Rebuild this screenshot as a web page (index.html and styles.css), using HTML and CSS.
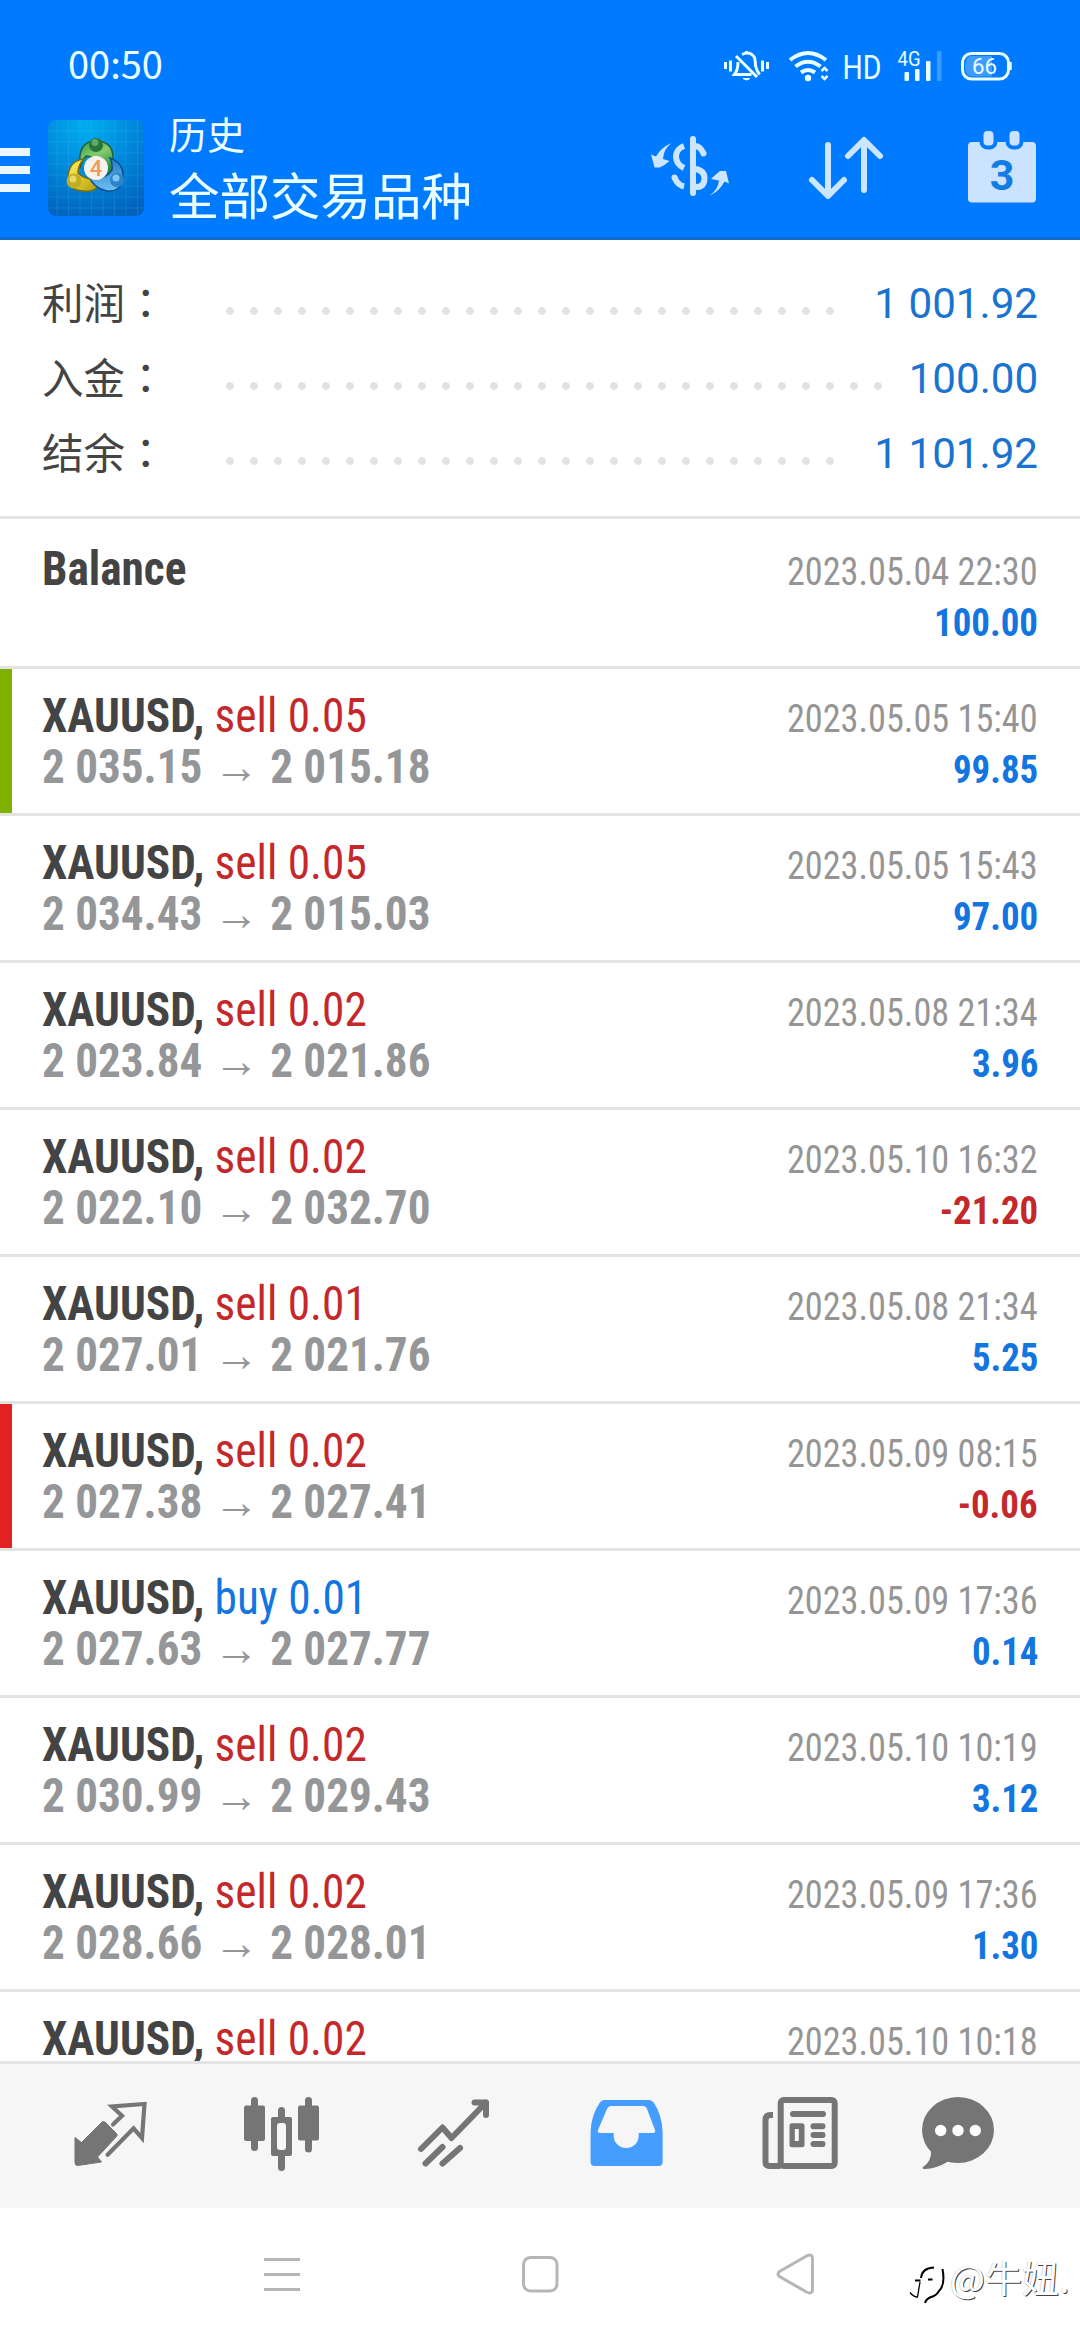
FILE: index.html
```html
<!DOCTYPE html>
<html lang="zh-CN">
<head>
<meta charset="utf-8">
<title>历史</title>
<link rel="stylesheet" href="styles.css">
</head>
<body>
<div class="screen">
  <header class="header">
    <div class="status">
      <span class="clock">00:50</span>
      <svg class="status-icons" viewBox="715 40 310 52">
        <g fill="none" stroke="#eaffff" stroke-width="3">
          <path d="M725.5 62v7M730.5 60.500v11M762.500 60.500v11M767.500 62v7"/>
          <path d="M736 56l21 21M742 54.500q8-4 12.500 3q1 4 1 8q1 5 4 9M738 62q0 8-3.500 12.500h17M746.500 51v3"/>
          <path d="M743 78.500q3.500 3 7 0z" fill="#eaffff" stroke-width="1"/>
          <path d="M790 60q18-14 36 0M795.500 66.500q12.500-9.500 25 0M801 72.500q7-5 14 0" stroke-width="4"/>
          <path d="M821.500 71l3-3 3 3M821.500 76l3 3 3-3" stroke-width="2.500"/>
          <rect x="962.500" y="53.500" width="46" height="25.500" rx="9"/>
          <path d="M1010.500 62v8" stroke-width="2.500"/>
        </g>
        <path d="M970 56h22v20.500h-22q-5-2-5-10t5-10.500z" fill="#fff" opacity=".25"/>
        <circle cx="808" cy="78" r="3.200" fill="#eaffff"/>
        <g fill="#eaffff">
          <rect x="904.500" y="72" width="4.500" height="9" rx="1"/>
          <rect x="915" y="69" width="4.500" height="12" rx="1"/>
          <rect x="926" y="61" width="4.500" height="20" rx="1"/>
          <rect x="937" y="51" width="4.500" height="30" rx="1" opacity=".25"/>
          <text x="842.500" y="78.500" font-size="33" textLength="39" lengthAdjust="spacingAndGlyphs">HD</text>
          <text x="897.500" y="66" font-size="20.500" textLength="23" lengthAdjust="spacingAndGlyphs">4G</text>
          <text x="972" y="74" font-size="22.500" textLength="25" lengthAdjust="spacingAndGlyphs">66</text>
        </g>
      </svg>
    </div>
    <div class="toolbar">
      <div class="menu"><i></i><i></i><i></i></div>
      <svg class="logo" viewBox="0 0 96 96">
        <defs>
          <radialGradient id="bg" cx=".4" cy=".05" r="1"><stop offset="0" stop-color="#00aeee"/><stop offset=".5" stop-color="#0088dc"/><stop offset="1" stop-color="#0062bb"/></radialGradient>
          <linearGradient id="gr" x2=".5" y2="1"><stop offset="0" stop-color="#2f9c4e"/><stop offset=".5" stop-color="#86cc6c"/><stop offset="1" stop-color="#248640"/></linearGradient>
          <linearGradient id="ye" x2="1" y2="1"><stop offset="0" stop-color="#fff36a"/><stop offset=".5" stop-color="#e2c92c"/><stop offset="1" stop-color="#a99c18"/></linearGradient>
          <linearGradient id="bl" x2="0" y2="1"><stop offset="0" stop-color="#2878c4"/><stop offset="1" stop-color="#6cc0f4"/></linearGradient>
        </defs>
        <rect width="96" height="96" rx="8" fill="url(#bg)"/>
        <path d="M9 0v96M20.500 0v96M32 0v96M43.500 0v96M55 0v96M66.500 0v96M78 0v96M89.500 0v96M0 11h96M0 22h96M0 33h96M0 44h96M0 55h96M0 66h96M0 77h96M0 88h96" stroke="#5fd0ff" stroke-width="1" opacity=".16"/>
        <path d="M32 48q-3-27 16-27t17 22q0 12-7 14q-6-20-20-21q-4 4-6 12z" fill="url(#gr)" stroke="#245f35" stroke-width="1.500"/>
        <path d="M36 39q-14 1-16 17q-1 14 15 15q17 2 15-12q-14 1-20-6q0-8 6-14z" fill="url(#ye)" stroke="#776f12" stroke-width="1.500"/>
        <path d="M62 38q14 5 13 20q-2 14-16 13q-14-3-18-15q16 5 23-6q1-6-2-12z" fill="url(#bl)" stroke="#0a528f" stroke-width="1.500"/>
        <circle cx="48" cy="25" r="7" fill="#28753a"/><circle cx="47" cy="22.500" r="3.500" fill="#61a767"/>
        <circle cx="26" cy="61" r="7.500" fill="#c1ad24"/><circle cx="25" cy="59" r="3.500" fill="#e6da62"/>
        <circle cx="69" cy="60" r="7" fill="#2d83c9"/><circle cx="68" cy="58" r="3.500" fill="#7fc6f2"/>
        <circle cx="48" cy="48" r="12" fill="#f7f2f0"/>
        <text x="48" y="55.500" class="logo-num">4</text>
      </svg>
      <div class="titles"><div class="title">历史</div><div class="subtitle">全部交易品种</div></div>
      <svg class="actions" viewBox="640 120 440 96">
        <g fill="#cce6ff">
          <rect x="690" y="136" width="6" height="60" rx="3"/>
          <path d="M671.500 143q-8 6-8.500 16l6.500 2q-6 5-10 6.500h-5l-3.500-13 5 2q5-9 15.500-13.500z"/>
          <path d="M709 196q9-6 10-15.500l-8-1.500q5-5 9-8h6l3 12.500-4.500-2q-5 10-15.500 14.500z"/>
        </g>
        <g fill="none" stroke="#cce6ff" stroke-width="6">
          <path d="M684 146q-8 3-8 10.500t8 11.500M674.500 177.500q3 7.500 9.500 9"/>
          <path d="M674.500 177.500h.01M703.500 153.500q-3-7-8-7.500M695 169q10 1.500 9.500 10t-9.500 8" stroke-linecap="round"/>
          <path d="M828 145v50M812 180l16 16 16-16M864 190v-49M848 156l16-16 16 16" stroke-linecap="round" stroke-linejoin="round"/>
        </g>
        <rect x="968" y="142" width="68" height="60.500" rx="4" fill="#cce3ff"/>
        <g fill="#cce3ff" stroke="#007aff" stroke-width="4"><rect x="981.500" y="129" width="14" height="18.500" rx="6"/><rect x="1007.500" y="129" width="14" height="18.500" rx="6"/></g>
        <text x="1002" y="189.500" class="cal-num">3</text>
      </svg>
    </div>
  </header>

  <section class="summary">
    <div class="sum-row"><span class="sum-label">利润<span lang="zh-TW">：</span></span><span class="dots"></span><span class="sum-value">1 001.92</span></div>
    <div class="sum-row"><span class="sum-label">入金<span lang="zh-TW">：</span></span><span class="dots dots-long"></span><span class="sum-value">100.00</span></div>
    <div class="sum-row"><span class="sum-label">结余<span lang="zh-TW">：</span></span><span class="dots"></span><span class="sum-value">1 101.92</span></div>
  </section>

  <main class="list">
    <article class="deal first"><div class="line"><b class="name">Balance</b><span class="date">2023.05.04 22:30</span></div><div class="line"><b class="price">&nbsp;</b><b class="profit">100.00</b></div></article>
    <article class="deal tp"><div class="line"><span class="name"><b>XAUUSD,</b> <span class="sell">sell 0.05</span></span><span class="date">2023.05.05 15:40</span></div><div class="line"><b class="price">2 035.15 <i>→</i> 2 015.18</b><b class="profit">99.85</b></div></article>
    <article class="deal"><div class="line"><span class="name"><b>XAUUSD,</b> <span class="sell">sell 0.05</span></span><span class="date">2023.05.05 15:43</span></div><div class="line"><b class="price">2 034.43 <i>→</i> 2 015.03</b><b class="profit">97.00</b></div></article>
    <article class="deal"><div class="line"><span class="name"><b>XAUUSD,</b> <span class="sell">sell 0.02</span></span><span class="date">2023.05.08 21:34</span></div><div class="line"><b class="price">2 023.84 <i>→</i> 2 021.86</b><b class="profit">3.96</b></div></article>
    <article class="deal"><div class="line"><span class="name"><b>XAUUSD,</b> <span class="sell">sell 0.02</span></span><span class="date">2023.05.10 16:32</span></div><div class="line"><b class="price">2 022.10 <i>→</i> 2 032.70</b><b class="profit loss">-21.20</b></div></article>
    <article class="deal"><div class="line"><span class="name"><b>XAUUSD,</b> <span class="sell">sell 0.01</span></span><span class="date">2023.05.08 21:34</span></div><div class="line"><b class="price">2 027.01 <i>→</i> 2 021.76</b><b class="profit">5.25</b></div></article>
    <article class="deal sl"><div class="line"><span class="name"><b>XAUUSD,</b> <span class="sell">sell 0.02</span></span><span class="date">2023.05.09 08:15</span></div><div class="line"><b class="price">2 027.38 <i>→</i> 2 027.41</b><b class="profit loss">-0.06</b></div></article>
    <article class="deal"><div class="line"><span class="name"><b>XAUUSD,</b> <span class="buy">buy 0.01</span></span><span class="date">2023.05.09 17:36</span></div><div class="line"><b class="price">2 027.63 <i>→</i> 2 027.77</b><b class="profit">0.14</b></div></article>
    <article class="deal"><div class="line"><span class="name"><b>XAUUSD,</b> <span class="sell">sell 0.02</span></span><span class="date">2023.05.10 10:19</span></div><div class="line"><b class="price">2 030.99 <i>→</i> 2 029.43</b><b class="profit">3.12</b></div></article>
    <article class="deal"><div class="line"><span class="name"><b>XAUUSD,</b> <span class="sell">sell 0.02</span></span><span class="date">2023.05.09 17:36</span></div><div class="line"><b class="price">2 028.66 <i>→</i> 2 028.01</b><b class="profit">1.30</b></div></article>
    <article class="deal"><div class="line"><span class="name"><b>XAUUSD,</b> <span class="sell">sell 0.02</span></span><span class="date">2023.05.10 10:18</span></div></article>
  </main>

  <nav class="tabs">
    <svg viewBox="0 2064 180 144"><path d="M75 2137.500l6.500 5 20-20q2-2 4 0l11 11q1.500 1.500 0 3l-19 20.500 4 5-24 3.500q-2.500 0-2.500-3z" fill="#757575" stroke="#757575" stroke-linejoin="round"/><path d="M113 2124.500l9-8.800-10-9.200 32.500-2.500-2.500 34-8.400-9.700-26 26.500" fill="none" stroke="#757575" stroke-width="4.200" stroke-linecap="round"/></svg>
    <svg viewBox="180 2064 180 144"><g fill="#757575"><rect x="251" y="2097" width="7" height="54" rx="3.500"/><rect x="244" y="2105.500" width="21" height="35.500" rx="2"/><rect x="278" y="2107" width="7" height="64" rx="3.500"/><rect x="271" y="2117" width="21" height="39" rx="2"/><rect x="305" y="2097" width="7" height="55.500" rx="3.500"/><rect x="298" y="2105.500" width="21" height="35" rx="2"/></g><rect x="277" y="2123" width="9" height="27" rx="3" fill="#f6f6f6"/></svg>
    <svg viewBox="360 2064 180 144"><path d="M421 2149l21.500-21.500 9 10.500 34.500-35.500M474.500 2102.500h11.500v12.500M442.500 2147l-17 16.500M460 2148l-17.500 15.500" fill="none" stroke="#757575" stroke-width="6" stroke-linecap="round" stroke-linejoin="round"/></svg>
    <svg viewBox="540 2064 180 144"><path fill="#449dff" fill-rule="evenodd" d="M604 2100h45q3 0 5 3q8 12 8.600 29v30q0 4-4 4h-64q-4 0-4-4v-30q.500-17 9-29q2-3 4.400-3zM611 2106q-2.500 0-4 3l-9 21q-1 3 2 3h13.700v3a12.500 12 0 0 0 25 0v-3h14.300q3 0 2-3l-8-21q-1-3-4-3z"/></svg>
    <svg viewBox="720 2064 180 144"><g fill="none" stroke="#757575" stroke-width="6"><rect x="780.700" y="2100" width="54" height="66" rx="3"/><path d="M773 2115h-2.500q-5 0-5 5v42q0 4 4 4h11"/><path d="M793 2114h30M813.500 2126.300h9M813.500 2135h9M813.500 2144h9" stroke-linecap="round"/></g><path fill="#757575" fill-rule="evenodd" d="M792 2123.300h10q2.500 0 2.500 2.500v19q0 2.500-2.500 2.500h-10q-2.500 0-2.500-2.500v-19q0-2.500 2.500-2.500zM794.800 2129v12h4v-12z"/></svg>
    <svg viewBox="900 2064 180 144"><ellipse cx="958" cy="2130" rx="36" ry="33" fill="#757575"/><path d="M931 2150q1 11-8 17q-1.500 2 2 2q11 0 24-8z" fill="#757575"/><g fill="#fff"><circle cx="940.700" cy="2130.500" r="5.700"/><circle cx="958" cy="2130.500" r="5.700"/><circle cx="975.300" cy="2130.500" r="5.700"/></g></svg>
  </nav>
  <footer class="sysnav">
    <svg viewBox="0 2208 360 132"><path d="M264 2259.500h36M264 2274.500h36M264 2289.500h36" stroke="#b6b6b6" stroke-width="3"/></svg>
    <svg viewBox="360 2208 360 132"><rect x="523.500" y="2257.500" width="33.500" height="33.500" rx="7" fill="none" stroke="#b6b6b6" stroke-width="3"/></svg>
    <svg viewBox="720 2208 360 132"><path d="M779.500 2271.500l27-15.500q6-3 6 3v30q0 6-6 3l-27-15.500q-3-2.500 0-5z" fill="none" stroke="#b6b6b6" stroke-width="3"/><g fill="none" stroke="#000"><path d="M921 2278q1-10 13-10.500M915 2280.500h5.500M928 2279.500h4.500" stroke-width="2"/><path d="M920 2282l-2.500 15q-4 0-7.500-4.500" stroke-width="1.300"/><path d="M942.500 2269q3 16-3.500 22q-3 5-8 6q-5 2-6 6" stroke-width="2"/></g></svg>
    <span class="watermark">@牛妞.</span>
  </footer>
</div>
</body>
</html>
```
FILE: styles.css
```css
* { box-sizing: border-box; }
body { margin: 0; background: #fff; }
svg { display: block; }
.screen { width: 1080px; height: 2340px; display: flex; flex-direction: column; overflow: hidden; background: #fff; font-family: Roboto, "Noto Sans CJK SC", sans-serif; }

.header { height: 240px; flex: none; background: #007aff; border-bottom: 3px solid #0f6ccf; color: #eaffff; font-family: "Noto Sans CJK SC", sans-serif; }
.status { height: 120px; padding: 40px 55px 0 68px; display: flex; justify-content: space-between; }
.clock { font-size: 38px; line-height: 52px; margin-top: -3px; }
.status-icons { width: 310px; height: 52px; font-family: Roboto, sans-serif; }
.toolbar { display: flex; height: 96px; }
.menu { width: 30px; margin-right: 18px; padding-top: 28px; display: flex; flex-direction: column; gap: 10px; }
.menu i { height: 8px; background: #eaf7ff; }
.logo { width: 96px; height: 96px; }
.logo-num { font: 500 22px Roboto, sans-serif; text-anchor: middle; fill: #f09a55; }
.titles { flex: 1; margin-left: 25px; }
.title { font-size: 38px; line-height: 40px; margin-top: -7px; }
.subtitle { font-size: 50.500px; line-height: 60px; margin-top: 10px; white-space: nowrap; }
.actions { width: 440px; height: 96px; }
.cal-num { font: 700 43px Roboto, sans-serif; text-anchor: middle; fill: #127ce5; }

.summary { height: 279px; flex: none; padding: 26px 42px 0; border-bottom: 3px solid #e3e3e3; }
.sum-row { height: 75px; display: flex; align-items: center; }
.sum-label { width: 176px; margin-top: -5px; font: 400 41.500px/75px "Noto Sans CJK SC", sans-serif; color: #444; }
.sum-label span { font-family: "Noto Sans CJK TC", sans-serif; }
.dots { width: 624px; height: 24px; margin-top: 15px; background: radial-gradient(circle, #e2e2e2 3.500px, transparent 4.200px) 0 0 / 24px 24px; }
.dots-long { width: 672px; }
.sum-value { margin-left: auto; font-size: 43px; line-height: 75px; color: #1b73d0; transform: scaleX(.98); transform-origin: 100% 0; }

.list { height: 1542px; flex: none; overflow: hidden; }
.deal { height: 147px; padding: 21px 42px 0; border-bottom: 3px solid #e3e3e3; font-family: "Roboto Condensed", Roboto, sans-serif; }
.first { height: 150px; padding-top: 24px; }
.tp { background: linear-gradient(#80b000, #80b000) 0 0 / 12px 100% no-repeat; }
.sl { background: linear-gradient(#e32222, #e32222) 0 0 / 12px 100% no-repeat; }
.line { height: 51px; line-height: 51px; display: flex; justify-content: space-between; align-items: baseline; white-space: nowrap; }
.name, .price { font-size: 48px; transform: scaleX(.944); transform-origin: 0 0; color: #444; }
.price { color: #959698; transform: scaleX(.94); }
.price i { font-style: normal; font-weight: 400; margin: 0 1px; }
.sell { color: #c4282b; }
.buy { color: #1275e0; }
.date, .profit { font-size: 39px; transform: scaleX(.93); transform-origin: 100% 0; color: #959595; }
.profit { color: #1275e0; transform: scaleX(.945); }
.loss { color: #c4282b; }

.tabs { height: 147px; flex: none; display: flex; background: #f6f6f6; border-top: 3px solid #e3e3e3; }
.tabs svg { width: 180px; height: 144px; }
.sysnav { height: 132px; display: flex; position: relative; }
.sysnav svg { width: 360px; height: 132px; }
.watermark { position: absolute; left: 950px; top: 42px; font: 37px/54px "Noto Sans CJK SC", sans-serif; color: #fff; text-shadow: 1px 1px 0 #444, -1px 0 1px #ddd; white-space: nowrap; }
```
